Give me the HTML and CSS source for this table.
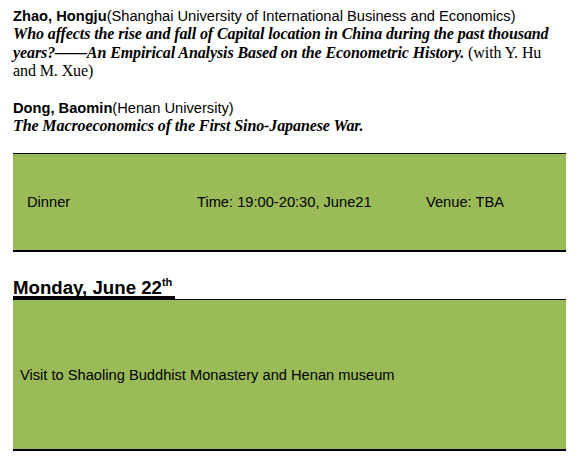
FILE: index.html
```html
<!DOCTYPE html>
<html>
<head>
<meta charset="utf-8">
<link rel="stylesheet" href="styles.css">
</head>
<body>
<div class="page">
  <div class="entry">
    <div class="author"><b>Zhao, Hongju</b>(Shanghai University of International Business and Economics)</div>
    <div class="paper"><i><b>Who affects the rise and fall of Capital location in China during the past thousand years?——An Empirical Analysis Based on the Econometric History.</b></i> (with Y. Hu and M. Xue)</div>
  </div>
  <div class="entry">
    <div class="author"><b>Dong, Baomin</b>(Henan University)</div>
    <div class="paper"><i><b>The Macroeconomics of the First Sino-Japanese War.</b></i></div>
  </div>
  <div class="box dinner">
    <span class="c1">Dinner</span>
    <span class="c2">Time: 19:00-20:30, June21</span>
    <span class="c3">Venue: TBA</span>
  </div>
  <h2 class="day">Monday, June 22<sup>th</sup></h2>
  <div class="box visit">
    <span>Visit to Shaoling Buddhist Monastery and Henan museum</span>
  </div>
</div>
</body>
</html>
```
FILE: styles.css
```css
html, body { margin: 0; padding: 0; background: #fff; }
.page { padding: 7px 21px 0 13px; color: #000; }
.entry { margin-bottom: 18px; }
.author { font-family: "Liberation Sans", Arial, sans-serif; font-size: 14.67px; line-height: 18px; }
.paper { font-family: "Liberation Serif", "Times New Roman", serif; font-size: 16px; line-height: 18.5px; letter-spacing: -0.1px; }
.box { background: #9bbb59; border-top: 1px solid #000; border-bottom: 2px solid #000; font-family: "Liberation Sans", Arial, sans-serif; font-size: 14.67px; display: flex; align-items: center; }
.dinner { margin-top: 10px; height: 96px; padding-left: 14px; }
.c1 { width: 170px; }
.c2 { width: 229px; }
.visit { height: 149px; padding-left: 7px; }
.day { font-family: "Liberation Sans", Arial, sans-serif; font-size: 18.67px; font-weight: bold; margin: 28px 0 0 0; line-height: 16px; width: fit-content; padding-right: 3px; border-bottom: 3px solid #000; }
.day sup { font-size: 11px; vertical-align: top; line-height: 1; position: relative; top: -3px; }
```
